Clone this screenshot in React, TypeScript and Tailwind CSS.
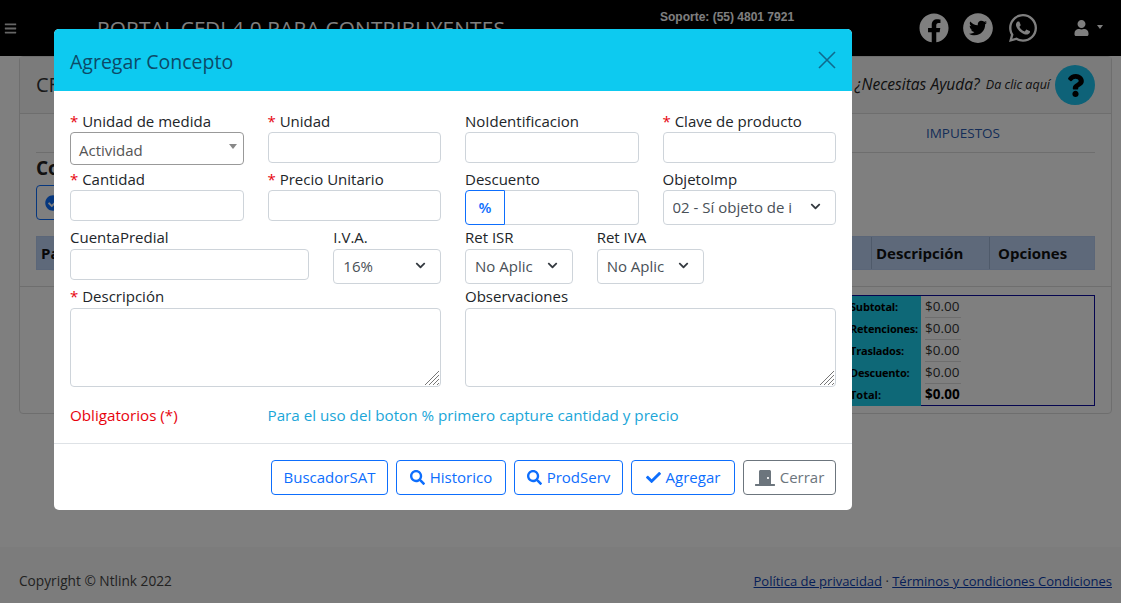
import { FaBars, FaCheck, FaChevronDown, FaDoorClosed, FaFacebook, FaSearch, FaUser, FaWhatsapp, FaCheckCircle, FaQuestion } from "react-icons/fa";
import { AiFillTwitterCircle } from "react-icons/ai";
import type { ReactNode } from "react";

const FONT = "font-['Open_Sans','Liberation_Sans',sans-serif]";
const inputCls = "block w-full h-[31px] rounded border border-[#ced4da] bg-white px-3 text-[15px] text-[#495057] outline-none";

function Label({ req, tight, children }: { req?: boolean; tight?: boolean; children: ReactNode }) {
  return (
    <label className={`block h-6 text-[15px] text-[#212529] whitespace-nowrap ${tight ? "leading-[24px]" : "leading-[26px]"}`}>
      {req && <span className="text-red-600">* </span>}
      {children}
    </label>
  );
}

function Sel({ value }: { value: string }) {
  return (
    <div className="relative">
      <select
        defaultValue={value}
        className="block w-full h-[35px] appearance-none rounded border border-[#ced4da] bg-white pl-[9px] pr-[28px] text-[15px] text-[#495057] outline-none"
      >
        <option>{value}</option>
      </select>
      <FaChevronDown className="pointer-events-none absolute right-[15px] top-[11px] w-[11px] h-[11px] text-[#343a40]" />
    </div>
  );
}

function Btn({ icon, children, gray, w }: { icon?: ReactNode; children: ReactNode; gray?: boolean; w: string }) {
  return (
    <button
      className={`flex h-[35px] ${w} items-center justify-center gap-[5px] rounded border bg-white text-[15px] ${
        gray ? "border-[#6c757d] text-[#6c757d]" : "border-[#0d6efd] text-[#0d6efd]"
      }`}
    >
      {icon}
      {children}
    </button>
  );
}

function Memo() {
  return (
    <div className="relative">
      <textarea className="block h-[79px] w-full resize rounded border border-[#ced4da] outline-none" />
      {/* the grip of the reference is larger than this browser's */}
      <svg viewBox="0 0 14 14" className="pointer-events-none absolute bottom-[2px] right-[2px] h-[14px] w-[14px] bg-white" stroke="#777" strokeWidth="1">
        <path d="M0 14L14 0M4 14L14 4M8 14l6-6M12 14l2-2" />
      </svg>
    </div>
  );
}

function Modal() {
  return (
    <div className="absolute left-[54px] top-[29px] w-[798px] overflow-hidden rounded-[5px] bg-white">
      <div className="flex h-[62px] items-center justify-between bg-[#0dcaf0] pl-4 pr-4">
        <h5 className="mt-[3px] text-[19.5px] text-[#0c4a68]">Agregar Concepto</h5>
        <svg viewBox="0 0 18 18" className="h-[18px] w-[18px] text-[#0f6a8e]" fill="none" stroke="currentColor" strokeWidth="1.6">
          <path d="M1 1l16 16M17 1L1 17" />
        </svg>
      </div>

      <div className="px-4 pb-4 pt-[17px]">
        <div className="grid grid-cols-4 gap-x-6 h-[58px]">
          <div>
            <Label req>Unidad de medida</Label>
            <div className="relative flex h-[33px] items-center rounded border border-[#999] pl-2 pt-[3px] text-[15px] text-[#555]">
              Actividad
              <span className="absolute right-[6px] top-[11px] border-x-[4px] border-t-[5px] border-x-transparent border-t-[#888]" />
            </div>
          </div>
          <div>
            <Label req>Unidad</Label>
            <input className={inputCls} />
          </div>
          <div>
            <Label>NoIdentificacion</Label>
            <input className={inputCls} />
          </div>
          <div>
            <Label req>Clave de producto</Label>
            <input className={inputCls} />
          </div>
        </div>

        <div className="grid grid-cols-4 gap-x-6 h-[59px]">
          <div>
            <Label req>Cantidad</Label>
            <input className={inputCls} />
          </div>
          <div>
            <Label req>Precio Unitario</Label>
            <input className={inputCls} />
          </div>
          <div>
            <Label>Descuento</Label>
            <div className="flex h-[35px]">
              <button className="flex h-[35px] w-10 items-center justify-center rounded-l border border-[#0d6efd] text-[15px] font-semibold text-[#0d6efd]">
                %
              </button>
              <input className="min-w-0 flex-1 rounded-r border border-l-0 border-[#ced4da] outline-none" />
            </div>
          </div>
          <div>
            <Label>ObjetoImp</Label>
            <Sel value="02 - Sí objeto de i" />
          </div>
        </div>

        <div className="grid grid-cols-2 gap-x-6 h-[59px]">
          <div className="grid grid-cols-3 gap-x-6">
            <div className="col-span-2">
              <Label tight>CuentaPredial</Label>
              <input className={inputCls} />
            </div>
            <div>
              <Label tight>I.V.A.</Label>
              <Sel value="16%" />
            </div>
          </div>
          <div className="grid grid-cols-3 gap-x-6">
            <div>
              <Label tight>Ret ISR</Label>
              <Sel value="No Aplic" />
            </div>
            <div>
              <Label tight>Ret IVA</Label>
              <Sel value="No Aplic" />
            </div>
          </div>
        </div>

        <div className="grid grid-cols-2 gap-x-6">
          <div>
            <Label req tight>Descripción</Label>
            <Memo />
          </div>
          <div>
            <Label tight>Observaciones</Label>
            <Memo />
          </div>
        </div>

        <div className="mt-4 grid grid-cols-12 gap-x-6 text-[15.2px] leading-6">
          <span className="col-span-3 text-red-600">Obligatorios (*)</span>
          <span className="col-span-9 text-[#1ba6d8]">Para el uso del boton % primero capture cantidad y precio</span>
        </div>
      </div>

      <div className="flex justify-end gap-2 border-t border-[#dee2e6] px-4 pb-[15px] pt-4">
        <Btn w="w-[117px]">BuscadorSAT</Btn>
        <Btn w="w-[110px]" icon={<FaSearch className="h-[15px] w-[15px]" />}>Historico</Btn>
        <Btn w="w-[109px]" icon={<FaSearch className="h-[15px] w-[15px]" />}>ProdServ</Btn>
        <Btn w="w-[104px]" icon={<FaCheck className="h-[15px] w-[15px]" />}>Agregar</Btn>
        <Btn w="w-[93px]" gray icon={<FaDoorClosed className="h-[18px] w-[20px]" />}>Cerrar</Btn>
      </div>
    </div>
  );
}

function Totals() {
  const rows = ["Subtotal:", "Retenciones:", "Traslados:", "Descuento:"];
  return (
    <div className="ml-auto mt-[8px] w-[247px] h-[111px] border border-[#0a0aa0]">
      {rows.map((r) => (
        <div key={r} className="flex h-[22px]">
          <div className="w-[72px] bg-[#1cd0ee] pl-[1px] text-[11px] font-bold leading-[22px] tracking-[-0.2px] text-black whitespace-nowrap overflow-hidden">{r}</div>
          <div className="ml-1 w-[36px] border-b border-[#ddd] text-[13.5px] leading-[21px] text-[#333]">$0.00</div>
        </div>
      ))}
      <div className="flex h-[22px]">
        <div className="w-[72px] bg-[#1cd0ee] pl-[1px] text-[11px] font-bold leading-[22px] text-black">Total:</div>
        <div className="ml-1 text-[13.5px] font-bold leading-[21px] text-black">$0.00</div>
      </div>
    </div>
  );
}

export default function App() {
  return (
    <div className={`${FONT} relative flex h-[603px] w-[1121px] flex-col overflow-hidden bg-white`}>
      {/* navbar */}
      <nav className="relative flex h-14 flex-none items-center bg-black text-white">
        <FaBars className="ml-[4px] h-[13px] w-[13px] text-[#ccc]" />
        <div className="ml-[80px] mt-[2px] text-[20.8px] font-medium whitespace-nowrap tracking-[0.2px]">PORTAL CFDI 4.0 PARA CONTRIBUYENTES</div>
        <div className="absolute left-[660px] top-[8px] text-[12px] font-bold font-['Liberation_Sans',sans-serif]">Soporte: (55) 4801 7921</div>
        <div className="ml-auto mr-[18px] flex items-center gap-[14px]">
          <FaFacebook className="h-[30px] w-[30px]" />
          <AiFillTwitterCircle className="h-[34px] w-[34px] -mx-[2px]" />
          <FaWhatsapp className="h-[32px] w-[32px]" />
          <div className="ml-[21px] flex items-center gap-[8px]">
            <FaUser className="h-[16px] w-[15px]" />
            <span className="mt-[-2px] border-x-[3px] border-t-[4px] border-x-transparent border-t-white" />
          </div>
        </div>
      </nav>

      {/* page */}
      <main className="pl-[19px] pr-[9px]">
        <div className="h-[358px] rounded border border-[#ddd] px-4">
          <div className="-mx-4 flex h-[57px] items-center border-b border-[#ddd] px-4 bg-[#f7f7f7]">
            <span className="text-[20px] text-[#333]">CFDI 4.0</span>
            <div className="ml-auto flex items-center gap-[5px] italic text-[#222]">
              <span className="text-[15.6px]">¿Necesitas Ayuda?</span>
              <span className="ml-[1px] text-[12.5px]">Da clic aquí</span>
              <span className="flex h-10 w-10 items-center justify-center rounded-full bg-[#1cc4f0]">
                <FaQuestion className="h-[23px] w-[23px] text-black" />
              </span>
            </div>
          </div>
          <div className="flex h-[39px] items-center justify-end border-b border-[#ddd] pr-[95px] text-[13.5px] text-[#2a5bb0]">
            IMPUESTOS
          </div>
          <div className="mt-[1px] h-[24px] text-[19px] font-bold text-[#222]">Conceptos</div>
          <button className="mt-[7px] flex h-[35px] items-center gap-2 rounded border border-[#0d6efd] px-2 text-[#0d6efd]">
            <FaCheckCircle /> Agregar
          </button>
          <div className="mt-4 flex h-[34px] border border-[#b6cdf0] bg-[#bcd3f5] text-[15px] font-bold leading-[32px] text-[#111]">
            <div className="flex-1 pl-[4px]">Partida</div>
            <div className="w-[118px] border-l border-[#9fb4d4] pl-[4px]">Descripción</div>
            <div className="w-[105px] border-l border-[#9fb4d4] pl-2">Opciones</div>
          </div>
          <div className="-mx-4 mt-4 border-t border-[#ddd]" />
          <Totals />
        </div>
      </main>

      {/* footer */}
      <footer className="mt-auto flex h-[56px] flex-none items-center justify-between bg-[#f8f8f8] pl-[19px] pr-[9px] pt-[13px] text-[13px] text-[#444]">
        <span className="text-[13.7px]">Copyright © Ntlink 2022</span>
        <span>
          <a className="text-[#0d3fb0] underline">Política de privacidad</a> ·{" "}
          <a className="text-[#0d3fb0] underline">Términos y condiciones Condiciones</a>
        </span>
      </footer>

      {/* backdrop */}
      <div className="absolute inset-0 bg-black/50" />
      <Modal />
    </div>
  );
}
